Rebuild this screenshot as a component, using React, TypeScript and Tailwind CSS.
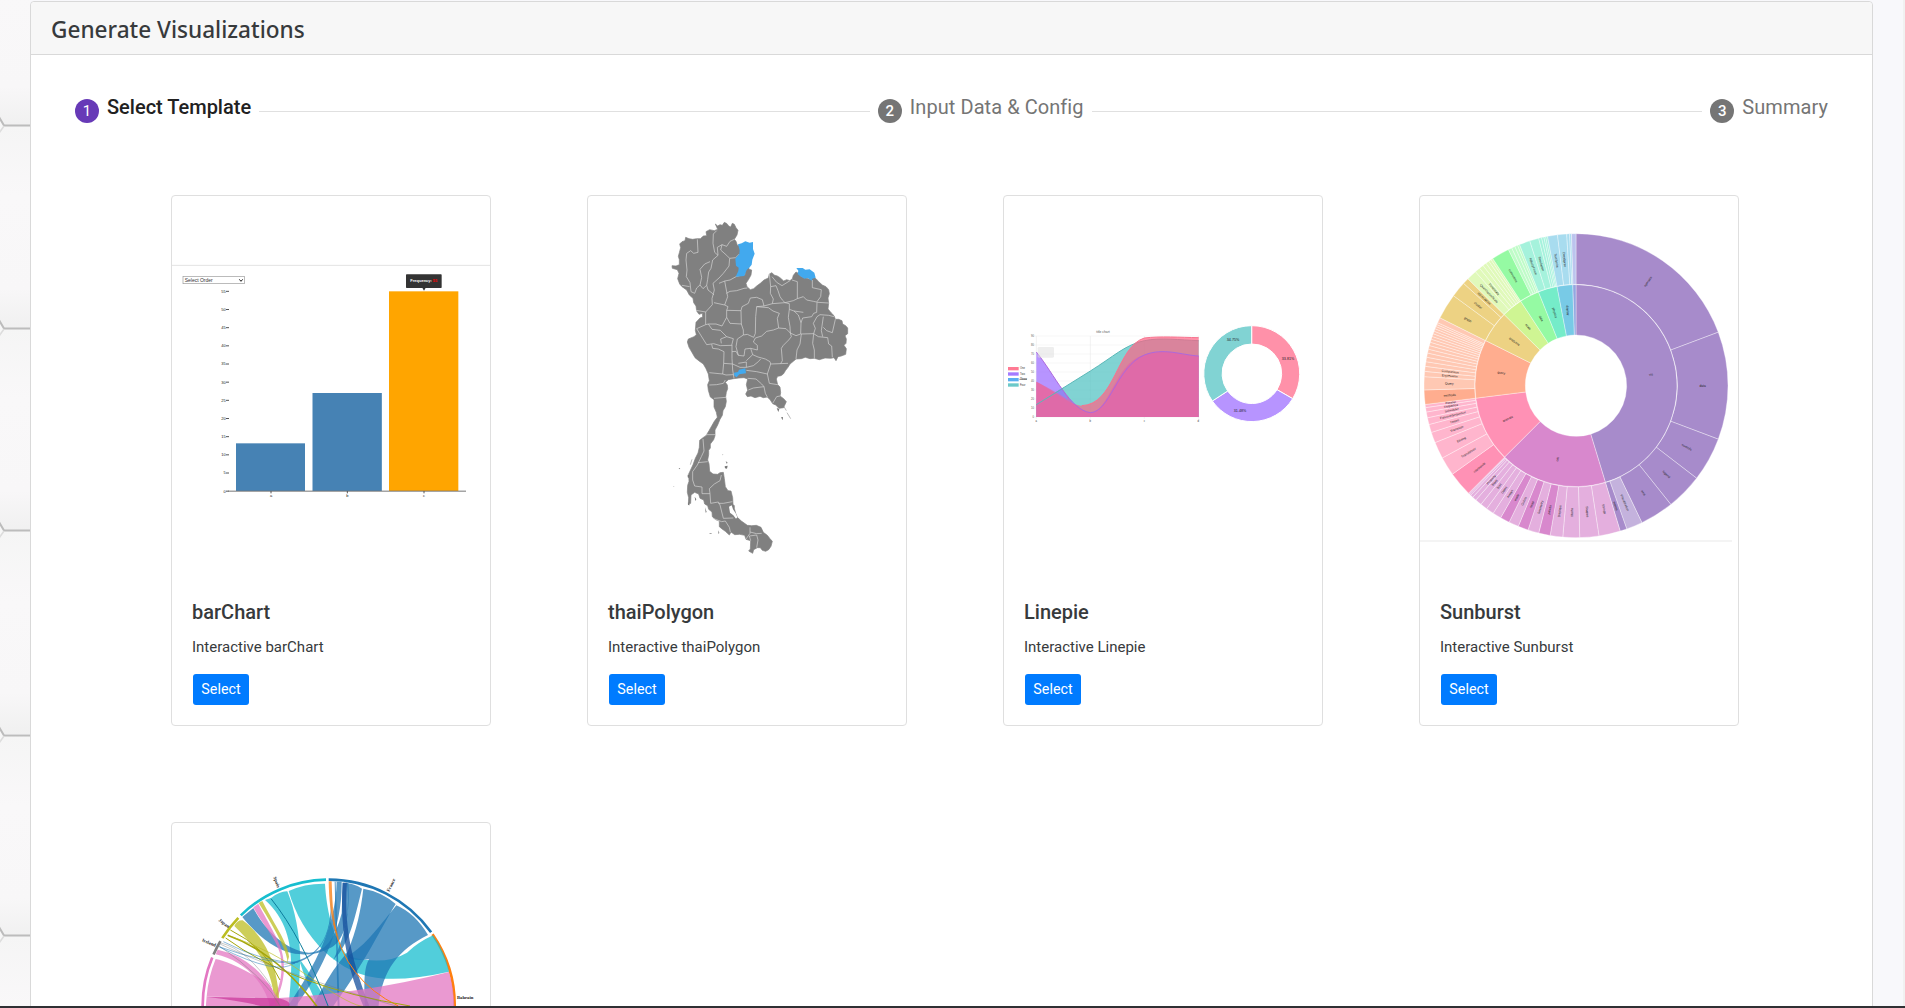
import React from "react";

function BarChartArt() {
  const ticks = [0, 5, 10, 15, 20, 25, 30, 35, 40, 45, 50, 55];
  return (
    <svg viewBox="36 33 954 1146" className="block h-[382px] w-[318px]" fontFamily="Liberation Sans">
      <path d="M36 241H990" stroke="#e3e3e3" strokeWidth="3" />
      <rect x="69" y="274" width="184" height="22" fill="#fff" stroke="#999" strokeWidth="2" />
      <text x="74" y="290" fontSize="15" fill="#333">Select Order</text>
      <path d="M238 283l5 6 5-6" fill="none" stroke="#222" strokeWidth="3" />
      {ticks.map((t) => (
        <g key={t}>
          <path d={`M198 ${918.5 - t * 10.9}h9`} stroke="#555" strokeWidth="3" />
          <text x="197" y={922.5 - t * 10.9} fontSize="12" textAnchor="end" fill="#222">{t}</text>
        </g>
      ))}
      <rect x="228" y="775" width="207" height="143" fill="#4682b4" />
      <rect x="457.500" y="624" width="208" height="294" fill="#4682b4" />
      <rect x="687" y="319" width="208" height="599" fill="#ffa500" />
      <path d="M204 918.500H918" stroke="#777" strokeWidth="3" />
      <path d="M333 918v7M562 918v7M792 918v7" stroke="#555" strokeWidth="3" />
      <g fontSize="12" fill="#222" textAnchor="middle">
        <text x="333" y="936">a</text>
        <text x="562" y="936">b</text>
        <text x="792" y="936">c</text>
      </g>
      <rect x="738" y="268" width="107" height="41" rx="2" fill="#333" />
      <path d="M786 307h12l-6 10z" fill="#333" />
      <text x="751" y="292" fontSize="12" fontWeight="bold" fill="#fff">Frequency:</text>
      <text x="818" y="292" fontSize="12" fontWeight="bold" fill="#f00">55</text>
    </svg>
  );
}

const MAINLAND =
  "M406 102L413 108 420 104 427 106 433 97 441 101 446 108 452 111 457 100 463 103 468 113 474 121 471 135 463 148 468 154 472 166 480 168 490 180 492 200 505 220 507 238 515 240 513 255 506 268 498 280 501 290 511 299 521 296 530 288 541 280 552 270 565 264 568 252 576 248 582 255 592 258 600 263 611 273 620 269 630 272 637 266 640 256 648 246 655 250 664 260 690 268 700 262 708 266 716 275 727 285 738 290 746 299 748 311 744 324 746 340 744 357 754 369 762 377 766 388 776 388 786 392 788 402 797 407 803 414 803 431 795 437 799 447 798 460 792 466 799 476 797 493 784 498 774 500 768 512 762 503 752 505 735 504 718 509 703 505 690 506 676 502 664 506 648 507 640 514 630 522 624 532 617 541 610 552 603 557 593 559 589 567 593 584 600 591 602 608 600 618 611 626 619 635 614 646 611 653 597 655 587 645 578 641 571 630 562 621 550 623 540 619 525 623 513 618 502 620 497 612 503 601 499 584 503 567 492 563 477 564 461 566 445 569 436 577 442 585 443 596 439 607 437 620 439 634 436 650 429 662 427 676 420 688 413 705 405 720 405 737 401 749 391 762 391 774 386 781 386 794 383 810 387 821 389 844 399 852 413 853 420 848 430 847 433 866 436 890 444 902 453 903 458 923 459 943 463 947 463 955 467 970 472 982 484 993 502 1006 515 1007 529 1006 543 1012 550 1027 562 1036 570 1046 577 1054 573 1069 566 1079 557 1084 547 1081 541 1073 532 1073 521 1079 518 1090 506 1083 511 1077 512 1052 498 1048 494 1036 479 1033 464 1034 453 1026 448 1035 436 1024 425 1016 418 1010 418 993 407 989 397 980 396 966 386 958 383 947 374 942 371 930 360 925 356 912 344 907 333 915 332 940 325 943 326 923 322 907 323 886 327 874 326 852 333 837 339 824 346 805 354 789 358 772 359 751 369 743 378 737 387 722 395 708 403 694 412 682 409 667 402 651 402 629 391 621 385 601 383 584 388 572 385 552 378 536 370 522 356 512 345 503 337 489 327 472 322 456 325 447 342 440 349 434 346 421 348 397 360 384 368 381 367 370 357 373 350 363 348 348 341 338 339 325 328 315 320 300 306 290 299 282 293 266 297 250 292 239 277 235 276 227 288 228 298 224 298 209 295 199 298 188 302 173 299 162 306 155 315 152 317 142 327 146 338 148 350 146 361 146 370 138 380 137 378 125 389 119 403 122 413 118z";

const BORDERS = [
  "M352 148L354 187 341 190 332 182 320 190 318 210 321 240 319 260 330 278 333 305 344 310 350 294 360 285 369 296 380 286 384 300 397 310 402 315",
  "M410 122L400 132 399 160 404 187 414 196 398 210 393 235 386 246 383 268 380 286M360 285L365 262 360 238 374 222 390 215",
  "M414 196L412 172 426 164 440 169 450 154 463 148M426 164L422 180 440 196 449 205 467 203 478 192M449 205L447 228 430 250 417 264 399 280 403 300M417 280L434 273 450 270 468 260 496 252M434 273L439 300 443 320 434 345 402 338M403 300L396 326 397 344 377 366 348 361M306 286L329 290",
  "M439 310L450 304 470 302 492 295 502 294M434 345L444 350 440 361 483 362 486 350 505 340 511 324 530 322 547 329 552 348 530 350 527 380 526 430 521 442 502 433 490 435M440 361L440 382 450 400 484 402 483 362M484 402L490 420 490 435 472 447 468 470 475 496",
  "M377 366L377 404 350 416M377 404L385 402 408 402 426 408 440 382M350 416L380 464 401 461 421 467 455 466 460 446 440 440 422 447 424 460M385 402L396 418 421 421 440 440M395 463L398 475 415 477 432 485 431 520 428 552 388 548",
  "M456 465L456 505 458 540 462 565M431 520L458 522 480 532 499 532 499 516 475 520M456 485L468 484 475 496 492 498 495 477 512 475 518 494 499 512M518 494L534 501 556 507 570 515 572 522 624 520M499 532L520 527 535 515 542 507M388 585L410 584 430 580 436 570M428 552L438 555 460 554M402 625L438 622",
  "M552 348L577 341 615 338 628 341 628 358 642 363 670 367M568 252L572 290 571 310 580 327 577 341M572 290L588 287 594 302 600 320 607 330 615 338M576 260L590 277 606 287 630 272M615 338L640 332 652 326 652 275 636 270M652 326L670 320 680 330 700 334 714 337 746 339M697 270L697 293 724 299 722 320 711 335",
  "M530 350L565 353 579 363 598 370 592 385 596 414 618 416 631 429 634 440 626 450 610 466 604 475 607 512 602 521M628 358L625 382 630 410 631 429 648 437 662 432 663 398 655 375 642 363M663 398L668 384 695 380 701 370 710 367 711 337M663 432L701 431 706 415 700 400 711 380 720 374 746 376 762 380",
  "M526 444L545 438 560 424 580 420 596 414M526 444L520 456 532 466 532 480 512 475M664 432L660 462 651 480 648 507M701 431L698 460 703 480 703 505M701 431L715 440 743 443 746 462 755 468 757 502M728 440L724 422 730 380M730 412L740 422 757 428 766 388",
  "M499 541L530 545 562 552 568 580 593 584M572 522L562 552M503 565L528 567 545 582 552 590 556 610 562 621M505 600L520 594 552 590M578 640L590 620 600 618",
  "M378 734L405 734M369 747L372 783 364 800 352 825 338 845 338 870 344 888 366 891 366 911 390 911 392 940 415 936 420 945 430 985 460 984M354 818L383 815M390 911L388 896 403 882 420 872 424 855M415 940L430 940 457 935M399 985L425 995 436 993 448 1012 451 1026M498 1047L510 1030 510 1012M510 1026L530 1031 545 1030M512 1052L508 1038 530 1035 534 1050 530 1073",
];

function ThailandArt() {
  return (
    <svg viewBox="24 18 954 1146" className="block h-[382px] w-[318px]">
      <path d={MAINLAND} fill="#808080" stroke="#808080" strokeWidth="2" strokeLinejoin="round" />
      {BORDERS.map((d, i) => (
        <path key={i} d={d} fill="none" stroke="#d8d8d8" strokeWidth="2" strokeLinejoin="round" />
      ))}
      <path d="M447 950l8-4 4 12 8 12 5 12-4 4-8-10-10-8z" fill="#fff" />
      <path d="M474 163L485 160 496 154 509 158 519 156 519 177 524 191 517 209 515 224 509 232 500 240 493 258 467 260 475 243 476 233 468 227 466 206 478 192 479 181z" fill="#42a9ee" />
      <path d="M649 234L668 234 676 239 689 238 703 248 707 263 697 266 695 272 683 264 673 266 660 258 653 252 655 242z" fill="#42a9ee" />
      <path d="M462 548L474 546 477 539 496 535 498 550 478 553 473 558 470 562 463 557z" fill="#42a9ee" />
      <path d="M590 654l8 3-3 9zM603 682l6-1-1 10zM437 813l6 5-3 3zM434 829l9-2-2 9-6-1zM427 793l3 1-2 2zM296 834l5 1-3 3zM323 854l6 2-2 8-4-2zM414 1021l4 7-2 5zM386 1029l10 1-3 2zM344 920l5 8-3 5zM375 952l5 14-3 2zM325 935l4 11-5-1zM281 888l2 2-2 1z" fill="#777" />
      <path d="M612 650l7 12M621 668l11 18M336 808l-5 16" fill="none" stroke="#999" strokeWidth="2" />
    </svg>
  );
}

function LinePieArt() {
  const legend = [
    { y: 171, c: "#ff7a93", t: "One" },
    { y: 187, c: "#a47bff", t: "Two" },
    { y: 204, c: "#5aaef0", t: "Three" },
    { y: 220, c: "#6cc9c9", t: "Four" },
  ];
  const levels = [0, 10, 20, 30, 40, 50, 60, 70, 80, 90];
  return (
    <svg viewBox="12 -342 954 1146" className="block h-[382px] w-[318px]" fontFamily="Liberation Sans" fontSize="8">
      <text x="309" y="69" fontSize="10" fill="#555" textAnchor="middle">title chart</text>
      {levels.map((v) => (
        <g key={v}>
          <path d={`M103 ${321 - v * 2.7}H596`} stroke="#ececec" strokeWidth="1.5" />
          <text x="102" y={324 - v * 2.7} textAnchor="end" fill="#555">{v}</text>
        </g>
      ))}
      <path d="M109 78V326M271 78V326M433 78V326M595 78V326" stroke="#e4e4e4" strokeWidth="1.500" />
      <g textAnchor="middle" fill="#333">
        <text x="109" y="336">a</text>
        <text x="271" y="336">b</text>
        <text x="433" y="336">c</text>
        <text x="595" y="336">d</text>
      </g>
      {legend.map((l) => (
        <g key={l.t}>
          <rect x="24" y={l.y} width="32" height="10" fill={l.c} />
          <text x="60" y={l.y + 7} fill="#333">{l.t}</text>
        </g>
      ))}
      <path d="M58 208H81" stroke="#333" strokeWidth="1.500" />
      <path d="M109 284L271 183C340 140 376 104 433 92C480 82 540 90 596 92V321H109z" fill="#4bc0c0" fillOpacity=".7" />
      <path d="M109 284L271 183C340 140 376 104 433 92C480 82 540 90 596 92" fill="none" stroke="#5ab8b8" strokeWidth="3" />
      <path d="M109 126C165 195 210 300 271 307C325 311 350 150 433 135C490 112 545 135 596 138V321H109z" fill="#9966ff" fillOpacity=".7" />
      <path d="M109 215C155 238 210 285 245 287C345 284 350 110 433 84C480 78 540 82 596 83V321H109z" fill="#ff6384" fillOpacity=".7" />
      <path d="M245 287C345 284 350 110 433 84C480 78 540 82 596 83" fill="none" stroke="#f7748f" strokeWidth="3" />
      <path d="M188 240C225 294 240 305 271 308C330 306 350 170 433 135C490 112 545 135 596 138V321H109V215C140 231 170 246 205 270z" fill="#e069aa" fillOpacity=".7" />
      <path d="M109 126C165 195 210 300 271 308C330 306 350 170 433 135C490 112 545 135 596 138" fill="none" stroke="#ad68dd" strokeWidth="3" />
      <path d="M109 284L190 234" stroke="#5ab8b8" strokeWidth="3" />
      <rect x="113" y="111" width="49" height="32" rx="4" fill="#ddd" fillOpacity=".5" />
      <g stroke="#fff" strokeWidth="3">
        <path d="M755 47A144 144 0 0 1 878 266L831 239A89 89 0 0 0 755 102z" fill="#ff91a9" />
        <path d="M878 266A144 144 0 0 1 637 273L683 243A89 89 0 0 0 831 239z" fill="#b794ff" />
        <path d="M637 273A144 144 0 0 1 755 47V102A89 89 0 0 0 683 243z" fill="#81d3d3" />
      </g>
      <g fontSize="11" fill="#222" textAnchor="middle">
        <text x="699" y="94">34.75%</text>
        <text x="864" y="151">33.81%</text>
        <text x="720" y="305">31.48%</text>
      </g>
    </svg>
  );
}

type Arc = [number, number, string, string?];

const INNER: Arc[] = [
  [0, 163.1, "#a78bcb", "vis"],
  [163.1, 225, "#d888cd", "util"],
  [225, 262.9, "#ff91b5", "animate"],
  [262.9, 296.5, "#ffad8f", "query"],
  [296.5, 314.7, "#edd283", "analytics"],
  [314.7, 326.8, "#cff593", "scale"],
  [326.8, 338.2, "#95faa3", "data"],
  [338.2, 349.2, "#75ecc9", "physics"],
  [349.2, 358.2, "#78cae6", "display"],
  [358.2, 360, "#93a6e0"],
];

const OUTER: Arc[] = [
  [0, 69.4, "#a78bcb", "operator"],
  [69.4, 110.6, "#a78bcb", "data"],
  [110.6, 127.5, "#a78bcb", "controls"],
  [127.5, 141.4, "#a78bcb", "legend"],
  [141.4, 154.3, "#a78bcb", "axis"],
  [154.3, 160.5, "#c4b2dd", "Visualization"],
  [160.5, 163.1, "#a78bcb", "events"],
  [163.1, 171.3, "#e4afde", "Strings"],
  [171.3, 178.6, "#e4afde", "Shapes"],
  [178.6, 185, "#e4afde", "Maths"],
  [185, 189.8, "#e4afde", "Displays"],
  [189.8, 194.2, "#d888cd", "palette"],
  [194.2, 198.4, "#e4afde", "Geometry"],
  [198.4, 202.3, "#d888cd", "heap"],
  [202.3, 206.1, "#e4afde", "Colors"],
  [206.1, 209.7, "#d888cd", "math"],
  [209.7, 213, "#e4afde", "Arrays"],
  [213, 216, "#e4afde", "Dates"],
  [216, 218.7, "#e4afde", "Sort"],
  [218.7, 221.2, "#e4afde", "Stats"],
  [221.2, 222.8, "#e4afde", "Property"],
  [222.8, 223.9, "#e4afde"],
  [223.9, 224.5, "#e4afde"],
  [224.5, 225, "#e4afde"],
  [225, 234.4, "#ff91b5", "interpolate"],
  [234.4, 241.6, "#ffb5cd", "Transitioner"],
  [241.6, 248, "#ffb5cd", "Easing"],
  [248, 252.1, "#ffb5cd", "Transition"],
  [252.1, 255.2, "#ffb5cd", "Tween"],
  [255.2, 257.8, "#ffb5cd", "FunctionSequence"],
  [257.8, 260, "#ffb5cd", "Scheduler"],
  [260, 261.7, "#ffb5cd", "Sequence"],
  [261.7, 262.9, "#ffb5cd", "Parallel"],
  [262.9, 268.4, "#ffad8f", "methods"],
  [268.4, 273.4, "#ffc8b3", "Query"],
  [273.4, 275.4, "#ffc8b3", "Expression"],
  [275.4, 277.3, "#ffc8b3", "Comparison"],
  [277.3, 279.1, "#ffc8b3"],
  [279.1, 280.8, "#ffc8b3"],
  [280.8, 282.4, "#ffc8b3"],
  [282.4, 283.9, "#ffc8b3"],
  [283.9, 285.3, "#ffc8b3"],
  [285.3, 286.6, "#ffc8b3"],
  [286.6, 287.8, "#ffc8b3"],
  [287.8, 288.9, "#ffc8b3"],
  [288.9, 290, "#ffc8b3"],
  [290, 291, "#ffc8b3"],
  [291, 292, "#ffc8b3"],
  [292, 292.9, "#ffc8b3"],
  [292.9, 293.7, "#ffc8b3"],
  [293.7, 294.5, "#ffc8b3"],
  [294.5, 296.5, "#ffc8b3"],
  [296.5, 306.3, "#edd283", "graph"],
  [306.3, 312.3, "#edd283", "cluster"],
  [312.3, 314.7, "#edd283", "optimization"],
  [314.7, 318.6, "#e0f9ba", "QuantitativeScale"],
  [318.6, 320.6, "#e0f9ba", "TimeScale"],
  [320.6, 322.3, "#e0f9ba"],
  [322.3, 323.7, "#e0f9ba"],
  [323.7, 325, "#e0f9ba"],
  [325, 326, "#e0f9ba"],
  [326, 326.8, "#e0f9ba"],
  [326.8, 333.6, "#95faa3", "converters"],
  [333.6, 335, "#bffcc8"],
  [335, 336.3, "#bffcc8"],
  [336.3, 337.4, "#bffcc8"],
  [337.4, 338.2, "#bffcc8"],
  [338.2, 342.3, "#a5f2dc", "NBodyForce"],
  [342.3, 345.8, "#a5f2dc", "Simulation"],
  [345.8, 346.9, "#a5f2dc"],
  [346.9, 347.8, "#a5f2dc"],
  [347.8, 348.5, "#a5f2dc"],
  [348.5, 349.2, "#a5f2dc"],
  [349.2, 353, "#a8dcef", "TextSprite"],
  [353, 356.5, "#a8dcef", "DirtySprite"],
  [356.5, 357.6, "#a8dcef"],
  [357.6, 358.3, "#a8dcef"],
  [358.3, 360, "#bcc4ee"],
];

function polar(cx: number, cy: number, r: number, deg: number) {
  const a = (deg * Math.PI) / 180;
  return `${(cx + r * Math.sin(a)).toFixed(2)} ${(cy - r * Math.cos(a)).toFixed(2)}`;
}

function wedge(cx: number, cy: number, r0: number, r1: number, a0: number, a1: number) {
  const big = a1 - a0 > 180 ? 1 : 0;
  return `M${polar(cx, cy, r1, a0)}A${r1} ${r1} 0 ${big} 1 ${polar(cx, cy, r1, a1)}L${polar(cx, cy, r0, a1)}A${r0} ${r0} 0 ${big} 0 ${polar(cx, cy, r0, a0)}z`;
}

function Ring({ arcs, r0, r1 }: { arcs: Arc[]; r0: number; r1: number }) {
  return (
    <g>
      {arcs.map(([a0, a1, fill, label]) => {
        const mid = (a0 + a1) / 2;
        const flip = mid < 180 ? 0 : 180;
        return (
          <g key={a0}>
            <path d={wedge(483, 587, r0, r1, a0, a1)} fill={fill} stroke="#fff" strokeOpacity=".7" strokeWidth="1.5" />
            {label && (
              <text
                transform={`translate(483 587) rotate(${mid - 90}) translate(${(r0 + r1) / 2} 0) rotate(${flip})`}
                dy="3"
                fontSize="9.5"
                textAnchor="middle"
                fill="#222"
              >
                {label}
              </text>
            )}
          </g>
        );
      })}
    </g>
  );
}

function SunburstArt() {
  return (
    <svg viewBox="15 18 954 1146" className="block h-[382px] w-[318px]" fontFamily="Liberation Sans">
      <Ring arcs={INNER} r0={152} r1={303} />
      <Ring arcs={OUTER} r0={304} r1={456} />
      <path d="M15 1053H951" stroke="#f0f0f0" strokeWidth="5" />
    </svg>
  );
}

function ChordArt() {
  const rim: Arc[] = [
    [0, 54.4, "#1f77b4"],
    [55.5, 93, "#ff7f0e"],
    [268, 292.500, "#e377c2"],
    [294, 300.8, "#7f7f7f"],
    [302.4, 314.2, "#bcbd22"],
    [315.8, 358.8, "#17becf"],
  ];
  return (
    <svg viewBox="21 9 954 1146" className="block h-[382px] w-[318px]" fontFamily="Liberation Serif">
      {rim.map(([a0, a1, c]) => (
        <path key={a0} d={wedge(491, 557, 374, 382, a0, a1)} fill={c} />
      ))}
      <g fillOpacity=".75">
        <path d="M371 213Q420 190 480 191C484 260 500 350 548 408Q655 440 726 398Q760 366 804 346Q842 400 852 455Q740 480 660 476C520 470 410 350 371 213z" fill="#17becf" />
        <path d="M300 240L318 234Q345 213 367 214C390 270 404 340 406 420L398 565H370C380 450 400 330 300 240z" fill="#17becf" />
        <path d="M406 420Q450 480 500 570H464C430 500 415 460 406 430z" fill="#17becf" />
        <path d="M546 190Q570 192 591 206C570 290 555 370 505 420C545 340 555 260 546 190z" fill="#1f77b4" />
        <path d="M595 206Q650 215 692 252C650 320 600 430 500 565H440C500 450 520 430 548 395C575 330 588 270 595 206z" fill="#1f77b4" />
        <path d="M694 256Q750 280 789 345C700 390 650 450 640 565H600C595 470 600 440 612 418Q560 425 548 408C600 380 650 310 694 256z" fill="#1f77b4" />
        <path d="M232 291L265 264C300 330 360 390 430 398Q500 400 530 280L533 188 550 188C555 290 540 360 500 382Q455 407 410 403C340 400 280 350 232 291z" fill="#1f77b4" />
        <path d="M533 188H546C538 300 550 400 616 565H598C545 450 524 320 533 188z" fill="#144f9c" />
        <path d="M515 185H530C532 320 480 440 388 565H364C450 440 512 320 515 185z" fill="#1f77b4" />
        <path d="M509 185H512L524 565H518zM498 190L500 290C480 380 450 410 390 430L350 434C430 420 490 390 497 270z" fill="#1f77b4" />
        <path d="M265 262L280 251C310 310 350 370 354 410C365 480 340 530 320 565H306C350 510 355 450 345 400 330 350 290 310 265 262z" fill="#e377c2" />
        <path d="M281 249L292 243C320 300 370 370 372 410L367 428Q370 390 281 249z" fill="#bcbd22" />
        <path d="M208 318Q216 300 233 301C300 350 340 430 344 565H330C325 440 275 385 208 318z" fill="#bcbd22" />
        <path d="M152 417Q200 425 312 492C330 520 335 532 340 535L125 529Q130 470 152 417z" fill="#e377c2" />
        <path d="M158 389Q260 410 320 505L335 565H316C300 480 230 420 152 403z" fill="#e377c2" />
        <path d="M125 529L330 535Q600 520 852 456Q868 510 868 565H122z" fill="#e377c2" />
        <path d="M128 531Q250 545 310 565H366Q390 545 340 535z" fill="#c9359a" fillOpacity=".7" />
        <path d="M491 184H500C502 260 506 320 530 378L515 342C495 290 492 230 491 184z" fill="#ff7f0e" />
      </g>
      <g fill="none">
        <path d="M506 310Q540 480 700 558" stroke="#ff7f0e" strokeWidth="3" />
        <path d="M188 346Q340 400 460 565" stroke="#a5a60b" strokeWidth="5" />
        <path d="M196 330Q300 380 345 480M182 354Q380 500 735 558" stroke="#a5a60b" strokeWidth="3" />
        <path d="M165 372Q350 460 700 560M160 376Q300 470 350 565M165 368Q250 390 320 500" stroke="#777" strokeWidth="1.200" />
        <path d="M162 380Q300 430 390 430M175 365Q300 430 400 427M165 382Q340 470 390 428" stroke="#1f77b4" strokeWidth="1.500" />
        <path d="M200 350Q320 390 440 475T600 560" stroke="#bcbd22" strokeWidth="2" />
        <path d="M318 236Q410 350 490 560" stroke="#0b7d9d" strokeWidth="3" />
      </g>
      <g fontSize="14" fontWeight="bold" fill="#222">
        <text transform="translate(325 172) rotate(70)">Spain</text>
        <text transform="translate(673 216) rotate(-64)">France</text>
        <text transform="translate(160 302) rotate(38)">Japan</text>
        <text transform="translate(110 364) rotate(22)">Ireland</text>
        <text x="876" y="536">Bahrain</text>
      </g>
    </svg>
  );
}

function TemplateCard({ name, art }: { name?: string; art: React.ReactNode }) {
  return (
    <article className="h-[531px] w-[320px] rounded border border-[#dfdfdf] bg-white">
      {art}
      {name && (
        <div className="px-5 pt-[22px]">
          <h5 className="text-[20px] font-medium leading-6 text-[#373a3c]">{name}</h5>
          <p className="mt-[11px] text-[15px] leading-6 text-[#373a3c]">Interactive {name}</p>
          <button className="ml-px mt-[15px] h-[31px] w-[56px] rounded-[3px] bg-[#007bff] text-[14.3px] leading-[21px] text-white">Select</button>
        </div>
      )}
    </article>
  );
}

function Step({ n, label, active }: { n: number; label: string; active?: boolean }) {
  return (
    <div className="flex h-6 shrink-0 items-center gap-2">
      <span
        className={
          active
            ? "flex size-6 items-center justify-center rounded-full bg-[#673ab7] text-[15px] text-white"
            : "flex size-6 items-center justify-center rounded-full bg-[#757575] text-[15px] font-medium text-white"
        }
      >
        {n}
      </span>
      <span
        className={
          active
            ? "-mt-[9px] whitespace-nowrap text-[20px] font-medium leading-6 text-[#212121]"
            : "-mt-[9px] whitespace-nowrap text-[20px] leading-6 tracking-[0.06px] text-[#757575]"
        }
      >
        {label}
      </span>
    </div>
  );
}

function HexEdges() {
  return (
    <svg viewBox="0 0 30 1006" className="block h-[1006px] w-[30px] shrink-0">
      <defs>
        <linearGradient id="tile" x1="0" x2="0" y1="0" y2="1">
          <stop offset="0" stopColor="#f5f5f5" />
          <stop offset=".35" stopColor="#f9f8f9" />
          <stop offset=".8" stopColor="#f8f7f8" />
          <stop offset="1" stopColor="#f0f0f0" />
        </linearGradient>
      </defs>
      {[-77, 125, 328, 530, 735, 935].map((y) => (
        <g key={y}>
          <rect x="0" y={y} width="30" height="204" fill="url(#tile)" />
          <path d={`M0 ${y - 7}L4 ${y}L0 ${y + 8}z`} fill="#f7f7f7" />
          <path d={`M-1 ${y - 8}L4 ${y + 0.5}H30`} fill="none" stroke="#bcbcbc" strokeWidth="2" />
          <path d={`M4 ${y + 1}L-1 ${y + 8}`} fill="none" stroke="#dcdcdc" strokeWidth="1.5" />
        </g>
      ))}
    </svg>
  );
}

export default function App() {
  const templates = [
    { id: 1, name: "barChart", art: <BarChartArt /> },
    { id: 2, name: "thaiPolygon", art: <ThailandArt /> },
    { id: 3, name: "Linepie", art: <LinePieArt /> },
    { id: 4, name: "Sunburst", art: <SunburstArt /> },
    { id: 5, art: <ChordArt /> },
  ];
  return (
    <div className="flex h-[1008px] w-[1905px] flex-col overflow-hidden bg-[#f8f8fb] font-['Roboto',sans-serif]">
      <div className="flex h-[1006px] shrink-0 overflow-hidden">
        <HexEdges />
        <main className="mt-px h-[1400px] w-[1843px] shrink-0 rounded-t border border-[#d9d9d9] bg-white">
          <header className="h-[53px] rounded-t border-b border-[#d9d9d9] bg-[#f7f7f7] px-5 pt-[13px] font-['Noto_Sans',sans-serif]">
            <h1 className="text-[22.6px] font-medium leading-[30px] text-[#373a3c]">Generate Visualizations</h1>
          </header>
          <div className="flex items-center gap-2 pl-[44px] pr-[44px] pt-[44px]">
            <Step n={1} label="Select Template" active />
            <div className="h-px flex-1 bg-[#e0e0e0]" />
            <Step n={2} label="Input Data & Config" />
            <div className="h-px flex-1 bg-[#e0e0e0]" />
            <Step n={3} label="Summary" />
          </div>
          <section className="grid grid-cols-[repeat(4,320px)] gap-24 pl-[140px] pt-[72px]">
            {templates.map((t) => (
              <TemplateCard key={t.id} name={t.name} art={t.art} />
            ))}
          </section>
        </main>
        <div className="flex flex-1 justify-end">
          <div className="w-[2px] bg-[#f1f1f1]" />
        </div>
      </div>
      <div className="h-[2px] shrink-0 bg-[#303034]" />
    </div>
  );
}
